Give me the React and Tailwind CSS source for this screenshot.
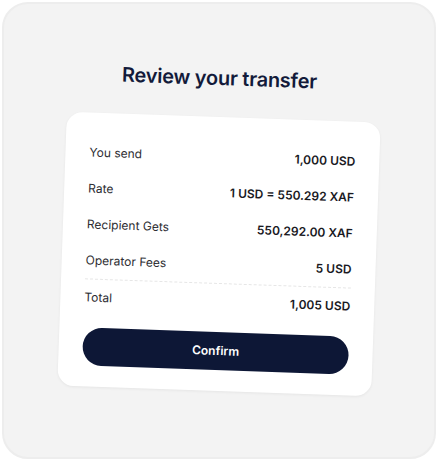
const rows = [
  { label: 'You send', value: '1,000 USD' },
  { label: 'Rate', value: '1 USD = 550.292 XAF' },
  { label: 'Recipient Gets', value: '550,292.00 XAF' },
  { label: 'Operator Fees', value: '5 USD' },
];

export default function App() {
  return (
    <div className="w-[438px] h-[461px] bg-white p-[2px] font-['Inter',sans-serif]">
      <div className="w-full h-full rounded-[26px] border-2 border-[#ededed] bg-[#f3f3f3] flex flex-col items-center pt-[60px]">
        <h1 className="rotate-2 text-[20px] leading-7 font-semibold text-[#121a3a] tracking-[-0.25px]">
          Review your transfer
        </h1>

        <div className="rotate-2 mt-[25px] w-[314px] bg-white rounded-[16px] px-6 pt-[22px] pb-[21px] shadow-[0_1px_3px_rgba(0,0,0,0.06)]">
          {rows.map((row) => (
            <div key={row.label} className="h-9 flex items-center justify-between text-[12px]">
              <span className="text-[#2e2e33]">{row.label}</span>
              <span className="font-semibold text-[#1a1a1f]">{row.value}</span>
            </div>
          ))}
          <div className="h-9 flex items-center justify-between text-[12px] border-t border-dashed border-[#e6e6e6]">
            <span className="text-[#2e2e33]">Total</span>
            <span className="font-semibold text-[#1a1a1f]">1,005 USD</span>
          </div>

          <button className="mt-[13px] w-full h-[38px] rounded-full bg-[#0d1736] text-white text-[12px] font-semibold">
            Confirm
          </button>
        </div>
      </div>
    </div>
  );
}
